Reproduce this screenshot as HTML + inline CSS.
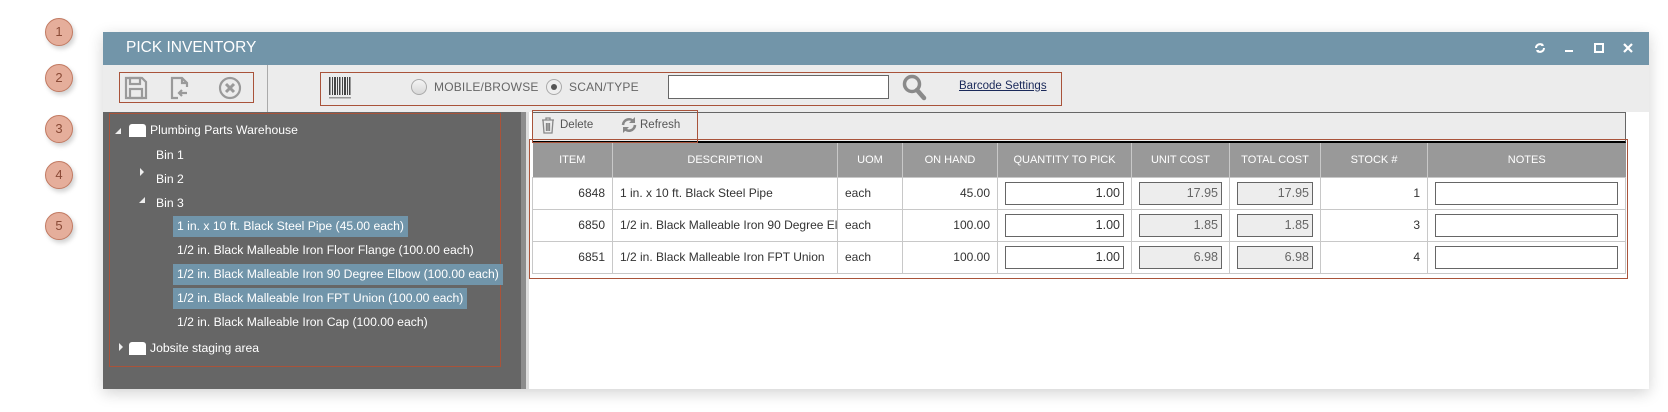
<!DOCTYPE html>
<html><head><meta charset="utf-8"><style>
*{box-sizing:border-box;margin:0;padding:0}
body{width:1668px;height:412px;background:#fff;font-family:"Liberation Sans",sans-serif;position:relative;overflow:hidden}
.a{position:absolute}
.circ{position:absolute;left:45px;width:28px;height:28px;border-radius:50%;background:#e5ae9b;border:1.5px solid #c27a62;color:#8a4a36;font-size:13px;text-align:center;line-height:25px;box-shadow:2px 3px 5px rgba(0,0,0,.18)}
.win{left:103px;top:32px;width:1546px;height:357px;background:#fff;box-shadow:0 4px 14px rgba(0,0,0,.18)}
.red{position:absolute;border:1.3px solid #a9533a}
.tree{color:#fff;font-size:12.2px;white-space:nowrap}
.hl{background:#7195aa;padding:3px 4px 4px 4px}
.tri{position:absolute;width:0;height:0}
.fold{position:absolute;width:17px;height:13px;background:#fff;border-radius:3px 3px 0 0}
table{border-collapse:collapse;position:absolute;left:532px;top:143px;width:1093px;font-size:12px;color:#333;table-layout:fixed}
th{background:#999;color:#fff;font-weight:normal;font-size:11px;height:34px;border-left:1px solid #c8c8c8;text-align:center}
td{height:32px;border:1px solid #c8c8c8;padding:0 7px;white-space:nowrap;overflow:hidden}
.r{text-align:right}
.in{height:23px;border:1.5px solid #666;background:#fff;text-align:right;padding-right:3px;line-height:20px;font-size:12.5px}
.gr{background:#ededed;color:#666}
</style></head><body>
<div class="circ" style="top:18px">1</div>
<div class="circ" style="top:64px">2</div>
<div class="circ" style="top:115px">3</div>
<div class="circ" style="top:161px">4</div>
<div class="circ" style="top:212px">5</div>

<div class="a win"></div>
<div class="a" style="left:103px;top:32px;width:1546px;height:33px;background:#7295a9"></div>
<div class="a" style="left:126px;top:39px;color:#fff;font-size:15.5px">PICK INVENTORY</div>
<svg class="a" style="left:1532px;top:40px" width="110" height="16" viewBox="0 0 110 16">
<path d="M4 8a4 4 0 0 1 7-2.5M12 8a4 4 0 0 1-7 2.5" stroke="#fff" stroke-width="2" fill="none"/><path d="M10 3l2 3-3 0z M6 13l-2-3 3 0z" fill="#fff"/>
<rect x="33" y="10" width="8" height="2" fill="#fff"/>
<rect x="63" y="4" width="8" height="8" fill="none" stroke="#fff" stroke-width="2"/>
<path d="M92 4l8 8M100 4l-8 8" stroke="#fff" stroke-width="2.2"/>
</svg>
<div class="a" style="left:103px;top:65px;width:1546px;height:47px;background:#ececec"></div>
<div class="a" style="left:267px;top:65px;width:1px;height:47px;background:#aaa"></div>
<div class="red" style="left:119px;top:72px;width:135px;height:31px"></div>
<svg class="a" style="left:122px;top:74px" width="130" height="28" viewBox="0 0 130 28">
<g fill="none" stroke="#9a9a9a" stroke-width="2.2">
<path d="M4 4h16l4 4v16H4z"/><rect x="8" y="4" width="10" height="6"/><rect x="8" y="15" width="12" height="9"/>
<path d="M56 24H50V4h10l5 5v4M60 4v5h5M65 19h-8M60 16l-3 3 3 3"/>
<circle cx="108" cy="14" r="10"/><path d="M104 10l8 8M112 10l-8 8" stroke-width="3"/>
</g></svg>
<div class="red" style="left:320px;top:72px;width:742px;height:34px"></div>
<svg class="a" style="left:328px;top:76px" width="24" height="24" viewBox="0 0 24 24"><g fill="#444"><rect x="1" y="1" width="1.5" height="18"/><rect x="4" y="1" width="1" height="18"/><rect x="6" y="1" width="2" height="18"/><rect x="9" y="1" width="1" height="18"/><rect x="11" y="1" width="1.5" height="18"/><rect x="14" y="1" width="1" height="18"/><rect x="16" y="1" width="2" height="18"/><rect x="19" y="1" width="1" height="18"/><rect x="21" y="1" width="1.5" height="18"/><rect x="1" y="21" width="22" height="1.5" opacity=".5"/></g></svg>
<div class="a" style="left:411px;top:79px;width:16px;height:16px;border-radius:50%;border:1px solid #aaa;background:linear-gradient(#f4f4f4,#d8d8d8)"></div>
<div class="a" style="left:434px;top:80px;font-size:12px;color:#666;letter-spacing:.2px">MOBILE/BROWSE</div>
<div class="a" style="left:546px;top:79px;width:16px;height:16px;border-radius:50%;border:1px solid #aaa;background:#eee"><div class="a" style="left:4px;top:4px;width:6px;height:6px;border-radius:50%;background:#555"></div></div>
<div class="a" style="left:569px;top:80px;font-size:12px;color:#666;letter-spacing:.2px">SCAN/TYPE</div>
<div class="a" style="left:668px;top:75px;width:221px;height:24px;background:#fff;border:1px solid #666"></div>
<svg class="a" style="left:902px;top:74px" width="26" height="27" viewBox="0 0 26 27"><circle cx="10" cy="10" r="7.5" fill="none" stroke="#8a8a8a" stroke-width="3.5"/><path d="M15 16l7 8" stroke="#8a8a8a" stroke-width="4.5" stroke-linecap="round"/></svg>
<div class="a" style="left:959px;top:80px;font-size:11.5px;color:#1b2a5a;text-decoration:underline">Barcode Settings</div>

<div class="a" style="left:103px;top:112px;width:418px;height:277px;background:#666"></div>
<div class="a" style="left:521px;top:112px;width:8px;height:277px;background:#8c8c8c"></div>
<div class="a" style="left:526px;top:112px;width:3px;height:277px;background:#ddd"></div>
<div class="red" style="left:109px;top:113px;width:392px;height:254px"></div>
<div class="tree">
<div class="tri" style="left:115px;top:128px;border-left:6px solid transparent;border-bottom:6px solid #eee"></div>
<div class="fold" style="left:129px;top:124px"></div>
<div class="a" style="left:150px;top:123px">Plumbing Parts Warehouse</div>
<div class="a" style="left:156px;top:148px">Bin 1</div>
<div class="tri" style="left:140px;top:168px;border-left:4px solid #eee;border-top:4px solid transparent;border-bottom:4px solid transparent"></div>
<div class="a" style="left:156px;top:172px">Bin 2</div>
<div class="tri" style="left:139px;top:197px;border-left:6px solid transparent;border-bottom:6px solid #eee"></div>
<div class="a" style="left:156px;top:196px">Bin 3</div>
<div class="a hl" style="left:173px;top:216px">1 in. x 10 ft. Black Steel Pipe (45.00 each)</div>
<div class="a" style="left:177px;top:243px">1/2 in. Black Malleable Iron Floor Flange (100.00 each)</div>
<div class="a hl" style="left:173px;top:264px">1/2 in. Black Malleable Iron 90 Degree Elbow (100.00 each)</div>
<div class="a hl" style="left:173px;top:288px">1/2 in. Black Malleable Iron FPT Union (100.00 each)</div>
<div class="a" style="left:177px;top:315px">1/2 in. Black Malleable Iron Cap (100.00 each)</div>
<div class="tri" style="left:119px;top:343px;border-left:4px solid #eee;border-top:4px solid transparent;border-bottom:4px solid transparent"></div>
<div class="fold" style="left:129px;top:342px"></div>
<div class="a" style="left:150px;top:341px">Jobsite staging area</div>
</div>

<div class="a" style="left:532px;top:112px;width:1094px;height:31px;background:#ececec;border:1px solid #666;border-bottom:2px solid #000"></div>
<div class="red" style="left:532px;top:110px;width:166px;height:33px"></div>
<svg class="a" style="left:540px;top:116px" width="16" height="18" viewBox="0 0 16 18"><g fill="none" stroke="#888" stroke-width="1.3"><path d="M2 4h12M6 4V2h4v2M3 4l1 13h8l1-13M6.5 7v8M8 7v8M9.5 7v8"/></g></svg>
<div class="a" style="left:560px;top:119px;font-size:11.5px;color:#555">Delete</div>
<svg class="a" style="left:620px;top:116px" width="18" height="18" viewBox="0 0 18 18"><g fill="none" stroke="#888" stroke-width="2.6"><path d="M3 9a6 6 0 0 1 11-3M15 9a6 6 0 0 1-11 3"/></g><path d="M15 1v6h-6z M3 17v-6h6z" fill="#888"/></svg>
<div class="a" style="left:640px;top:119px;font-size:11.5px;color:#555">Refresh</div>

<div class="red" style="left:529px;top:139px;width:1099px;height:140px"></div>
<table>
<colgroup><col style="width:80px"><col style="width:225px"><col style="width:65px"><col style="width:95px"><col style="width:134px"><col style="width:98px"><col style="width:91px"><col style="width:107px"><col style="width:198px"></colgroup>
<tr><th style="border-left:none">ITEM</th><th>DESCRIPTION</th><th>UOM</th><th>ON HAND</th><th>QUANTITY TO PICK</th><th>UNIT COST</th><th>TOTAL COST</th><th>STOCK #</th><th>NOTES</th></tr>
<tr><td class="r">6848</td><td>1 in. x 10 ft. Black Steel Pipe</td><td>each</td><td class="r">45.00</td><td><div class="in">1.00</div></td><td><div class="in gr">17.95</div></td><td><div class="in gr">17.95</div></td><td class="r">1</td><td><div class="in"></div></td></tr>
<tr><td class="r">6850</td><td style="padding-right:0">1/2 in. Black Malleable Iron 90 Degree Elb</td><td>each</td><td class="r">100.00</td><td><div class="in">1.00</div></td><td><div class="in gr">1.85</div></td><td><div class="in gr">1.85</div></td><td class="r">3</td><td><div class="in"></div></td></tr>
<tr><td class="r">6851</td><td>1/2 in. Black Malleable Iron FPT Union</td><td>each</td><td class="r">100.00</td><td><div class="in">1.00</div></td><td><div class="in gr">6.98</div></td><td><div class="in gr">6.98</div></td><td class="r">4</td><td><div class="in"></div></td></tr>
</table>
</body></html>
